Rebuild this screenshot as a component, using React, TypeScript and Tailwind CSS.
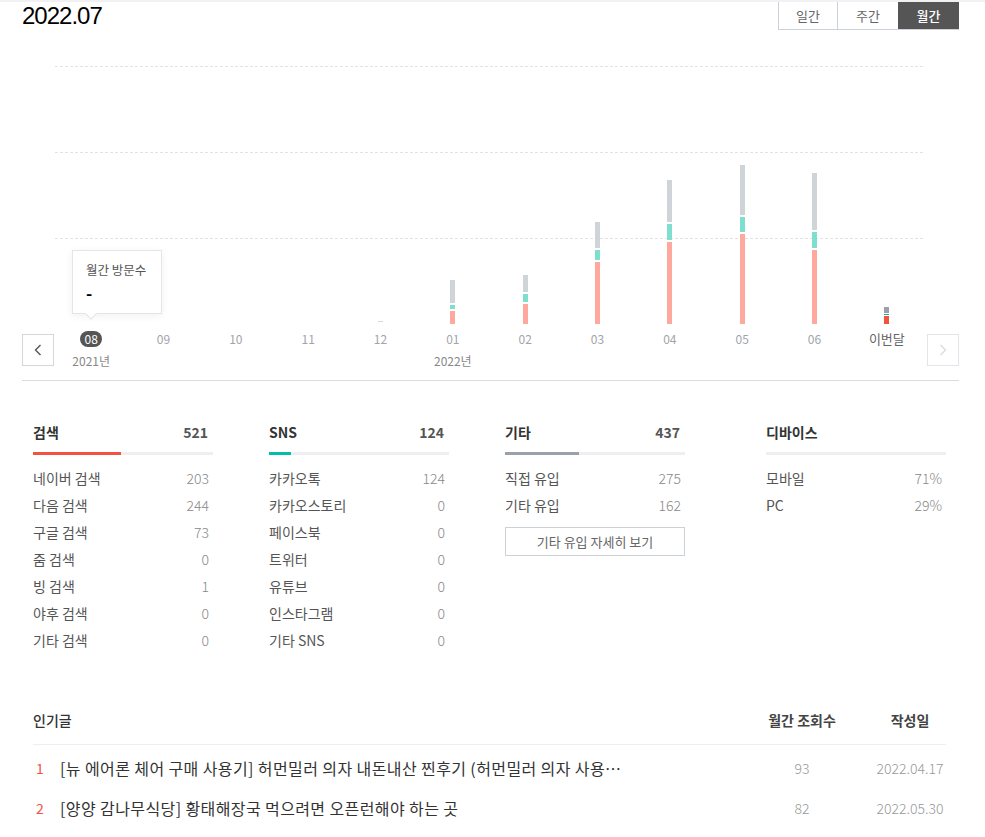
import React from "react";

type Month = {
  m: string;
  year?: string;
  active?: boolean;
  current?: boolean;
  tiny?: boolean;
  bar?: [number, number, number];
};

const months: Month[] = [
  { m: "08", year: "2021년", active: true },
  { m: "09" },
  { m: "10" },
  { m: "11" },
  { m: "12", tiny: true },
  { m: "01", year: "2022년", bar: [23, 4, 13] },
  { m: "02", bar: [17, 8, 20] },
  { m: "03", bar: [26, 10, 62] },
  { m: "04", bar: [42, 16, 82] },
  { m: "05", bar: [50, 15, 90] },
  { m: "06", bar: [57, 16, 74] },
  { m: "이번달", current: true, bar: [6, 1, 8] },
];

type Stat = {
  title: string;
  total?: string;
  color?: string;
  pct: number;
  rows: [string, string][];
  button?: boolean;
};

const stats: Stat[] = [
  {
    title: "검색",
    total: "521",
    color: "bg-[#f4513f]",
    pct: 88,
    rows: [
      ["네이버 검색", "203"],
      ["다음 검색", "244"],
      ["구글 검색", "73"],
      ["줌 검색", "0"],
      ["빙 검색", "1"],
      ["야후 검색", "0"],
      ["기타 검색", "0"],
    ],
  },
  {
    title: "SNS",
    total: "124",
    color: "bg-[#00bfa5]",
    pct: 22,
    rows: [
      ["카카오톡", "124"],
      ["카카오스토리", "0"],
      ["페이스북", "0"],
      ["트위터", "0"],
      ["유튜브", "0"],
      ["인스타그램", "0"],
      ["기타 SNS", "0"],
    ],
  },
  {
    title: "기타",
    total: "437",
    color: "bg-[#9aa1ab]",
    pct: 74,
    rows: [
      ["직접 유입", "275"],
      ["기타 유입", "162"],
    ],
    button: true,
  },
  {
    title: "디바이스",
    pct: 0,
    rows: [
      ["모바일", "71%"],
      ["PC", "29%"],
    ],
  },
];

const posts = [
  {
    rank: "1",
    title:
      "[뉴 에어론 체어 구매 사용기] 허먼밀러 의자 내돈내산 찐후기 (허먼밀러 의자 사용법 및 조절 방법)",
    views: "93",
    date: "2022.04.17",
  },
  {
    rank: "2",
    title: "[양양 감나무식당] 황태해장국 먹으려면 오픈런해야 하는 곳",
    views: "82",
    date: "2022.05.30",
  },
];

function Chevron({ dir, color }: { dir: "left" | "right"; color: string }) {
  return (
    <svg width="8" height="12" viewBox="0 0 8 12" fill="none">
      {dir === "left" ? (
        <polyline points="6.5,1 1.5,6 6.5,11" stroke={color} strokeWidth="1.4" />
      ) : (
        <polyline points="1.5,1 6.5,6 1.5,11" stroke={color} strokeWidth="1.4" />
      )}
    </svg>
  );
}

export default function App() {
  const font = "font-['Noto_Sans_CJK_KR','Noto_Sans',sans-serif]";
  return (
    <div className={`w-[985px] bg-white ${font}`}>
      <div className="h-[2px] bg-[#f1f1f3]" />
      <div className="ml-[22px] w-[937px]">
        {/* header */}
        <div className="flex h-[28px] items-center justify-between">
          <div className="font-['Liberation_Sans',Arial,sans-serif] text-[24px] leading-[28px] tracking-[-1px] text-black">
            2022.07
          </div>
          <div className="flex h-[28px] border-b border-l border-[#cdd1d9] text-[13px]">
            <div className="flex w-[59px] items-center justify-center border-r border-[#cdd1d9] text-[#666]">
              일간
            </div>
            <div className="flex w-[60px] items-center justify-center text-[#666]">주간</div>
            <div className="flex w-[61px] items-center justify-center bg-[#555] font-medium text-white">
              월간
            </div>
          </div>
        </div>

        {/* chart */}
        <div className="border-b border-[#dcdcdc] pb-[11px]">
          <div className="relative ml-[33px] mt-[36px] grid w-[868px]">
            <div className="col-start-1 row-start-1 flex flex-col">
              <div className="h-[86px] border-t border-dashed border-[#e2e2e2]" />
              <div className="h-[86px] border-t border-dashed border-[#e2e2e2]" />
              <div className="h-[86px] border-t border-dashed border-[#e2e2e2]" />
            </div>
            <div className="col-start-1 row-start-1 grid h-[258px] grid-cols-12 items-end">
              {months.map((mo) => (
                <div key={mo.m} className="flex justify-center">
                  {mo.bar ? (
                    <div
                      className={`flex w-[5px] flex-col ${mo.current ? "gap-[1px]" : "gap-[2px]"}`}
                    >
                      <div
                        className={mo.current ? "bg-[#9aa1aa]" : "bg-[#cfd4d9]"}
                        style={{ height: mo.bar[0] }}
                      />
                      <div
                        className={mo.current ? "bg-[#00bfa0]" : "bg-[#7fdfcf]"}
                        style={{ height: mo.bar[1] }}
                      />
                      <div
                        className={mo.current ? "bg-[#f4513f]" : "bg-[#ffa89d]"}
                        style={{ height: mo.bar[2] }}
                      />
                    </div>
                  ) : mo.tiny ? (
                    <div className="mb-[2px] h-[1px] w-[5px] bg-[#d5d8dc]" />
                  ) : null}
                </div>
              ))}
            </div>
            {/* tooltip */}
            <div className="absolute left-[17px] top-[184px] h-[64px] w-[90px] border border-[#e4e4ec] bg-white pl-[13px] pt-[11px] shadow-[0_2px_8px_rgba(0,0,0,0.06)]">
              <div className="text-[12.5px] leading-[16px] text-[#555]">월간 방문수</div>
              <div className="mt-[6px] text-[17px] font-bold leading-[18px] text-black">-</div>
              <div className="absolute -bottom-[5px] left-[14px] h-[8px] w-[8px] rotate-45 border-b border-r border-[#e4e4ec] bg-white" />
            </div>
          </div>

          <div className="mt-[7px] flex items-start">
            <div className="mt-[3px] flex h-[32px] w-[32px] items-center justify-center border border-[#d6d6d6] bg-white">
              <Chevron dir="left" color="#555" />
            </div>
            <div className="ml-[1px] grid w-[868px] grid-cols-12">
              {months.map((mo) => (
                <div key={mo.m} className="flex flex-col items-center">
                  {mo.active ? (
                    <div className="flex h-[16px] w-[22px] items-center justify-center rounded-full bg-[#555] text-[12px] leading-[16px] text-white">
                      {mo.m}
                    </div>
                  ) : (
                    <div
                      className={`h-[16px] leading-[16px] ${mo.current ? "text-[13px] text-[#666]" : "text-[12px] text-[#a2a4aa]"}`}
                    >
                      {mo.m}
                    </div>
                  )}
                  {mo.year && (
                    <div className="mt-[6px] text-[12px] leading-[16px] text-[#888]">{mo.year}</div>
                  )}
                </div>
              ))}
            </div>
            <div className="ml-[4px] mt-[3px] flex h-[32px] w-[32px] items-center justify-center border border-[#e2e5ec] bg-white">
              <Chevron dir="right" color="#dcdcdc" />
            </div>
          </div>
        </div>

        {/* stats */}
        <div className="flex pl-[11px] pt-[41px]">
          {stats.map((s, i) => (
            <div
              key={s.title}
              className={`w-[180px] ${i === 1 || i === 2 ? "ml-[56px]" : i === 3 ? "ml-[81px]" : ""}`}
            >
              <div className="flex h-[20px] items-center justify-between pr-[5px]">
                <span className="text-[14px] font-bold leading-[20px] text-[#333]">{s.title}</span>
                {s.total && (
                  <span className="text-[14px] font-bold leading-[20px] text-[#555]">{s.total}</span>
                )}
              </div>
              <div className="mt-[10px] h-[3px] bg-[#efeff1]">
                {s.color && <div className={`h-[3px] ${s.color}`} style={{ width: s.pct }} />}
              </div>
              <div className="mt-[10px]">
                {s.rows.map(([k, v]) => (
                  <div key={k} className="flex h-[27px] items-center justify-between pr-[4px]">
                    <span className="text-[14px] text-[#555]">{k}</span>
                    <span className="text-[14px] font-light text-[#888]">{v}</span>
                  </div>
                ))}
              </div>
              {s.button && (
                <div className="mt-[8px] flex h-[29px] items-center justify-center border border-[#cdd1d8] text-[13px] text-[#666]">
                  기타 유입 자세히 보기
                </div>
              )}
            </div>
          ))}
        </div>

        {/* popular posts */}
        <div className="mt-[42px] pl-[11px] pr-[13px]">
          <div className="flex h-[49px] items-center border-b border-[#efefef]">
            <span className="text-[14px] font-medium text-[#333]">인기글</span>
            <span className="flex-1" />
            <span className="w-[144px] text-center text-[14px] font-bold text-[#444]">월간 조회수</span>
            <span className="w-[72px] whitespace-nowrap text-center text-[14px] font-bold text-[#444]">
              작성일
            </span>
          </div>
          <div className="pt-[3px]">
            {posts.map((p) => (
              <div key={p.rank} className="flex h-[40px] items-center">
                <span className="w-[14px] text-center text-[14px] text-[#f4513f]">{p.rank}</span>
                <span className="ml-[13px] max-w-[566px] truncate text-[16px] tracking-[0.4px] text-[#333]">
                  {p.title}
                </span>
                <span className="flex-1" />
                <span className="w-[144px] text-center text-[14px] font-light text-[#999]">{p.views}</span>
                <span className="w-[72px] whitespace-nowrap text-center text-[14px] font-light text-[#999]">
                  {p.date}
                </span>
              </div>
            ))}
          </div>
        </div>
      </div>
    </div>
  );
}
